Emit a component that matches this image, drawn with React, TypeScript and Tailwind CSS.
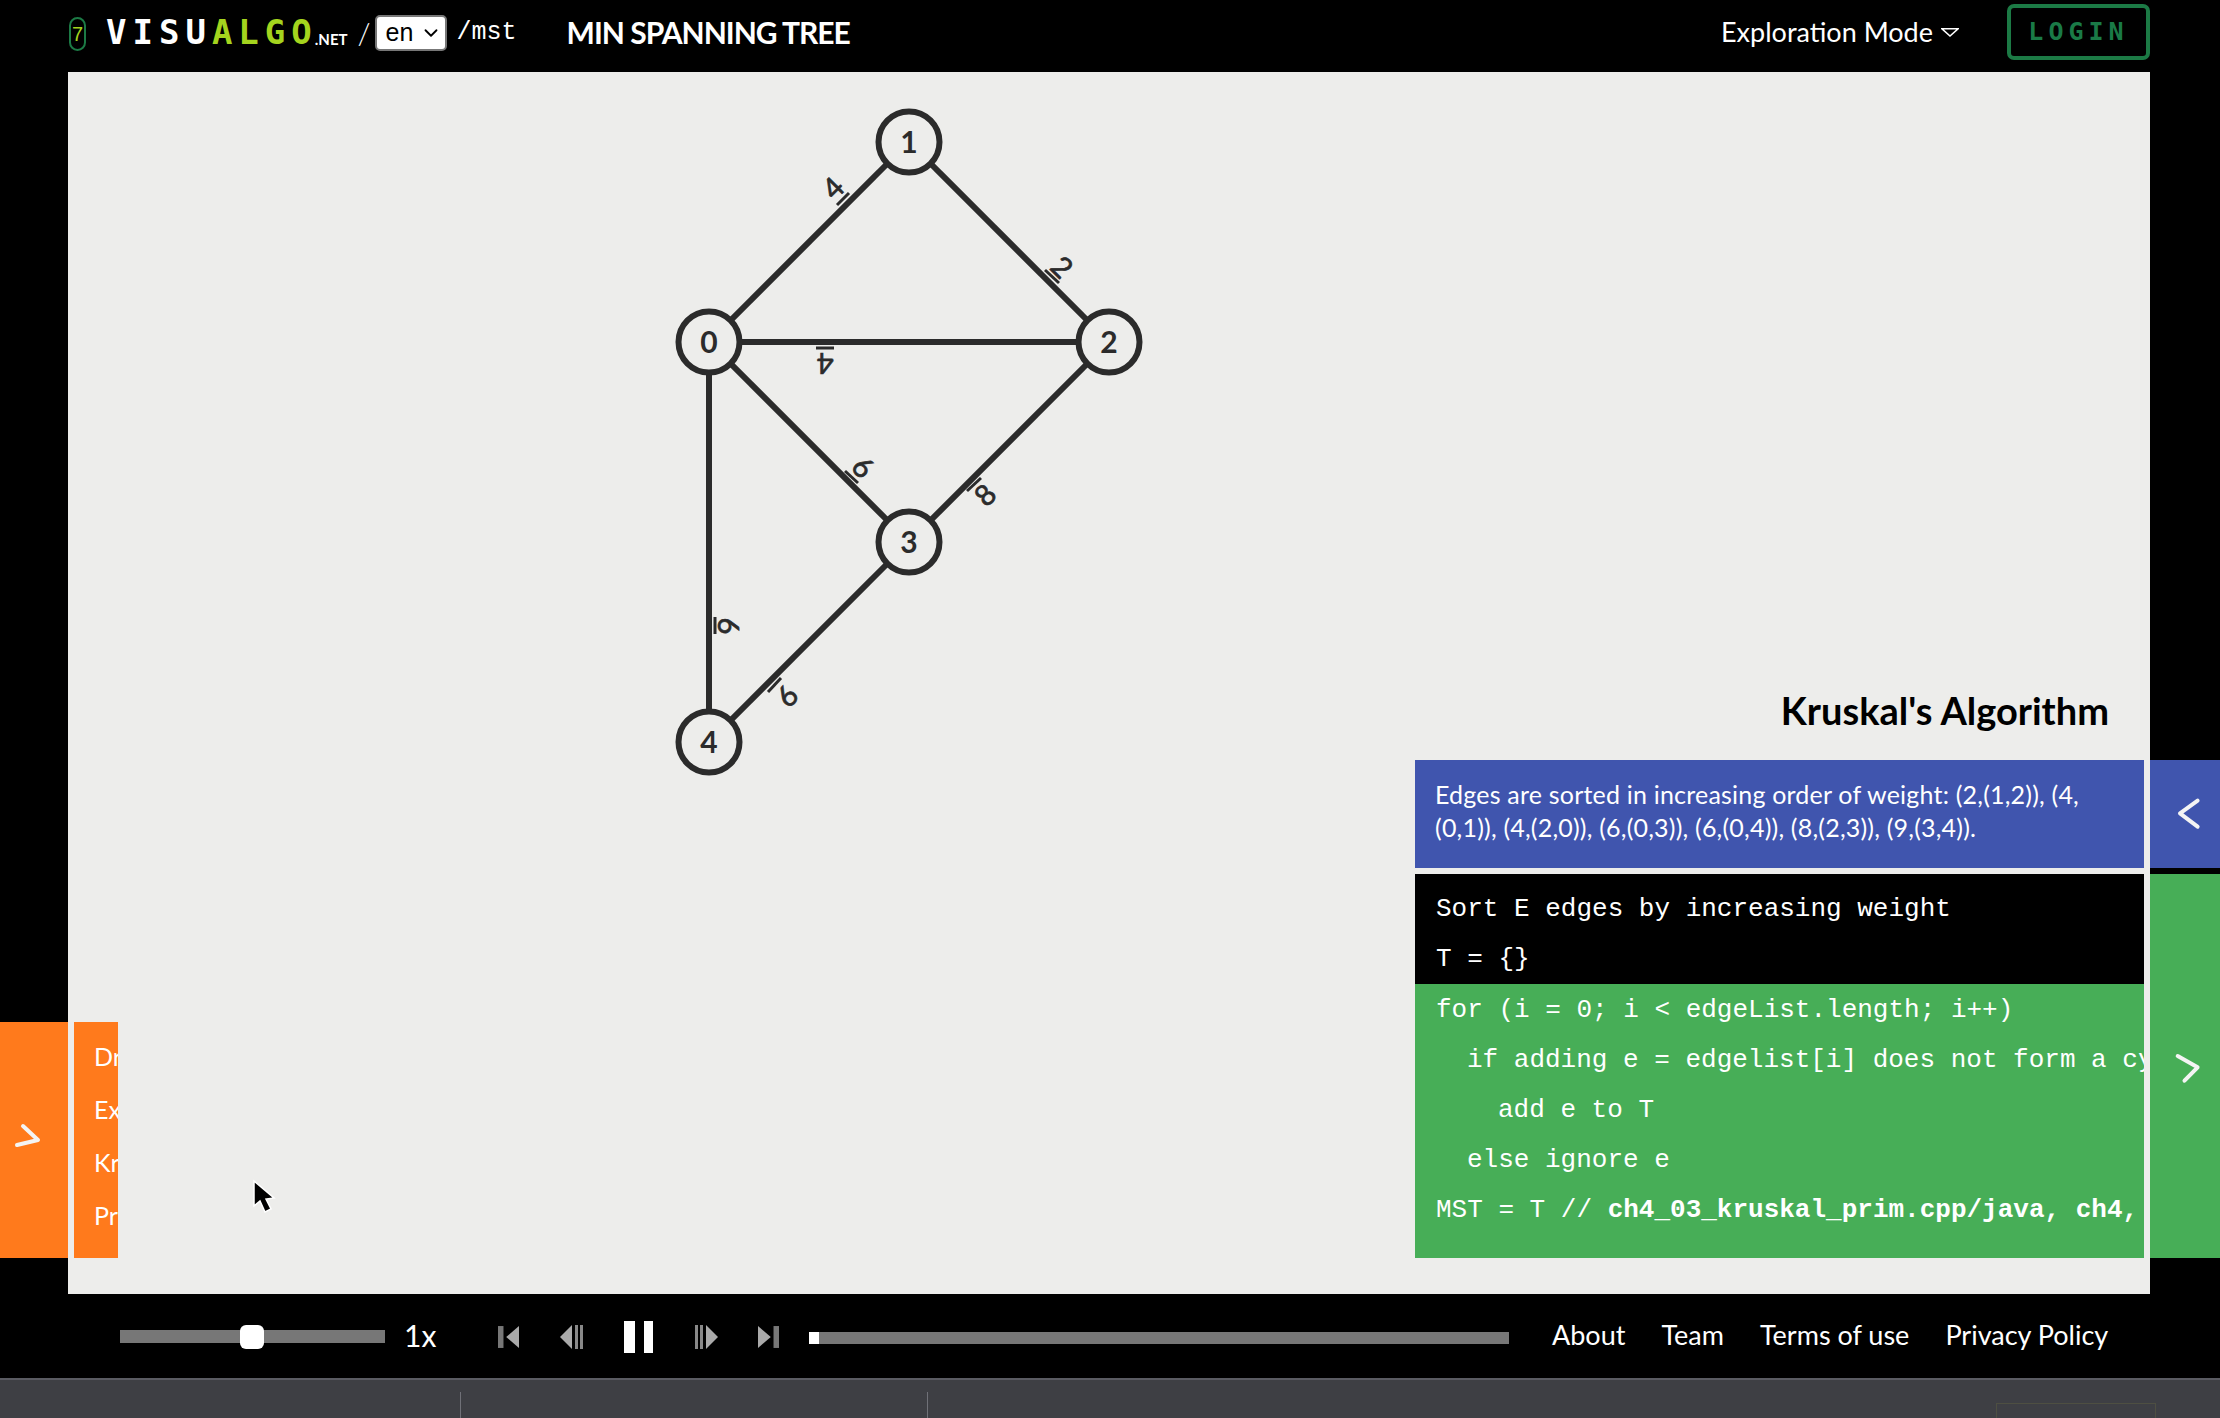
import { ChevronDown } from 'lucide-react';

const sans = 'font-["Lato","Noto_Sans",sans-serif]';
const mono = 'font-["Liberation_Mono",monospace]';

const nodes = [
    { id: 0, x: 709, y: 342 },
    { id: 1, x: 909, y: 142 },
    { id: 2, x: 1109, y: 342 },
    { id: 3, x: 909, y: 542 },
    { id: 4, x: 709, y: 742 },
];

const edges = [
    [0, 1],
    [1, 2],
    [0, 2],
    [0, 3],
    [2, 3],
    [0, 4],
    [3, 4],
];

// weight labels sit beside the edge, rotated, with a bar between digit and edge
const weights = [
    { w: '4', x: 833, y: 188, rot: -45, bar: [837, 205, 849, 193] },
    { w: '2', x: 1062, y: 267, rot: 45, bar: [1045, 270, 1059, 283] },
    { w: '4', x: 825, y: 363, rot: 180, bar: [816, 348, 834, 348] },
    { w: '6', x: 863, y: 467, rot: 45, bar: [845, 471, 858, 483] },
    { w: '8', x: 985, y: 495, rot: -45, bar: [967, 491, 981, 478] },
    { w: '6', x: 728, y: 626, rot: 90, bar: [715, 617, 715, 634] },
    { w: '6', x: 787, y: 696, rot: -45, bar: [768, 692, 781, 678] },
];

function Graph() {
    return (
        <svg className="absolute left-0 top-0" width={2082} height={1222} viewBox="68 72 2082 1222">
            {edges.map(([a, b]) => (
                <line
                    key={`${a}-${b}`}
                    x1={nodes[a].x}
                    y1={nodes[a].y}
                    x2={nodes[b].x}
                    y2={nodes[b].y}
                    stroke="#2b2b2b"
                    strokeWidth={6}
                />
            ))}
            {weights.map((e, i) => (
                <g key={i}>
                    <line x1={e.bar[0]} y1={e.bar[1]} x2={e.bar[2]} y2={e.bar[3]} stroke="#2b2b2b" strokeWidth={3} />
                    <text
                        x={e.x}
                        y={e.y}
                        dy="0.36em"
                        textAnchor="middle"
                        transform={`rotate(${e.rot} ${e.x} ${e.y})`}
                        fill="#2b2b2b"
                        stroke="#2b2b2b"
                        strokeWidth={0.7}
                        fontSize={29}
                        fontFamily="Lato, sans-serif"
                    >
                        {e.w}
                    </text>
                </g>
            ))}
            {nodes.map((n) => (
                <g key={n.id}>
                    <circle cx={n.x} cy={n.y} r={30.5} fill="#ededeb" stroke="#2b2b2b" strokeWidth={6} />
                    <text
                        x={n.x}
                        y={n.y}
                        dy="0.36em"
                        textAnchor="middle"
                        fill="#2b2b2b"
                        fontSize={30}
                        fontWeight={700}
                        fontFamily="Lato, sans-serif"
                    >
                        {n.id}
                    </text>
                </g>
            ))}
            {/* mouse pointer */}
            <path d="M254 1181 L254 1206 L260 1201 L265 1212 L271 1209 L266 1199 L274 1198 Z" fill="#000" stroke="#fff" strokeWidth={1.5} />
        </svg>
    );
}

function Header() {
    return (
        <header className="h-[72px] flex items-center pl-[69px] pr-[70px] pb-[8px] text-white">
            <div className="w-[17px] h-[34px] mt-[4px] rounded-full border-2 border-[#1c7a45] flex items-center justify-center text-[#a4d41e] text-[20px] font-['Liberation_Sans',sans-serif]">
                7
            </div>
            <div className="ml-[20px] text-[34px] leading-none font-bold tracking-[6px] font-['DejaVu_Sans_Mono',monospace] whitespace-nowrap">
                VISU<span className="text-[#a4d41e]">ALGO</span>
            </div>
            <span className={`text-[15px] font-bold mt-[14px] -ml-[3px] ${sans}`}>.NET</span>
            <span className={`ml-[10px] text-[30px] font-light ${sans}`}>/</span>
            <div className="ml-[4px] mt-[2px] w-[72px] h-[36px] bg-white rounded-[5px] border-2 border-[#777] flex items-center pl-[9px] gap-[7px] text-black text-[25px] font-['Liberation_Sans',sans-serif]">
                en
                <ChevronDown size={22} strokeWidth={2} />
            </div>
            <span className={`ml-[10px] mt-[2px] text-[25px] ${mono}`}>/mst</span>
            <h1 className={`ml-[50px] text-[30px] font-bold whitespace-nowrap tracking-[-1px] ${sans}`}>MIN SPANNING TREE</h1>

            <div className={`ml-auto flex items-center text-[27px] ${sans}`}>
                Exploration Mode
                <svg className="ml-[8px]" width={18} height={9} viewBox="0 0 18 9">
                    <path d="M1 0.8 H17 L9 8 Z" fill="none" stroke="#fff" strokeWidth={1.5} />
                </svg>
            </div>
            <div className="ml-[48px] w-[143px] h-[56px] rounded-[7px] border-[4px] border-[#1c7a45] flex items-center justify-center text-[#1a7a47] text-[25px] font-bold tracking-[5px] font-['DejaVu_Sans_Mono',monospace]">
                LOGIN
            </div>
        </header>
    );
}

function CodeLine({ children, className = 'pl-[21px]' }: { children: React.ReactNode; className?: string }) {
    return <div className={`h-[50px] flex items-center whitespace-pre ${className}`}><span>{children}</span></div>;
}

function StatusPanel() {
    return (
        <div className="w-[729px] mr-[6px] flex flex-col">
            <h2 className={`text-right pr-[35px] mb-[28px] text-[38px] leading-[44px] font-bold text-black ${sans}`}>Kruskal's Algorithm</h2>
            <div className={`h-[108px] bg-[#4055ae] text-white text-[25px] leading-[33px] pl-[20px] pt-[18px] whitespace-nowrap overflow-hidden tracking-[0.2px] ${sans}`}>
                Edges are sorted in increasing order of weight: (2,(1,2)), (4,
                <br />
                (0,1)), (4,(2,0)), (6,(0,3)), (6,(0,4)), (8,(2,3)), (9,(3,4)).
            </div>
            <div className={`mt-[6px] h-[384px] overflow-hidden text-white text-[26px] ${mono}`}>
                <div className="h-[110px] bg-black pt-[10px]">
                    <CodeLine>Sort E edges by increasing weight</CodeLine>
                    <CodeLine>T = {'{}'}</CodeLine>
                </div>
                <div className="h-[274px] bg-[#47ae57] pt-px">
                    <CodeLine>for (i = 0; i &lt; edgeList.length; i++)</CodeLine>
                    <CodeLine className="pl-[52px]">if adding e = edgelist[i] does not form a cycle</CodeLine>
                    <CodeLine className="pl-[83px]">add e to T</CodeLine>
                    <CodeLine className="pl-[52px]">else ignore e</CodeLine>
                    <CodeLine>
                        MST = T // <b>ch4_03_kruskal_prim.cpp/java, ch4,</b>
                    </CodeLine>
                </div>
            </div>
        </div>
    );
}

function ActionsPanel() {
    return (
        <div className={`ml-[6px] w-[44px] h-[236px] bg-[#ff7a1c] overflow-hidden text-white text-[25px] pl-[20px] pt-[8px] whitespace-nowrap ${sans}`}>
            {['Draw Graph', 'Example Graphs', "Kruskal's Algorithm", "Prim's Algorithm"].map((a) => (
                <div key={a} className="h-[53px] flex items-center">
                    {a}
                </div>
            ))}
        </div>
    );
}

function Arrow({ w, h, points }: { w: number; h: number; points: string }) {
    return (
        <svg width={w} height={h} viewBox={`0 0 ${w} ${h}`} className="block">
            <polyline points={points} fill="none" stroke="#f4f4f4" strokeWidth={4} strokeLinecap="round" strokeLinejoin="round" />
        </svg>
    );
}

function SkipIcon({ flip, end }: { flip?: boolean; end?: boolean }) {
    // "end" = skip to end/start shape, otherwise step shape with double bars
    return (
        <svg width={end ? 21 : 23} height={24} viewBox="0 0 23 24" className={flip ? '-scale-x-100' : ''}>
            {end ? (
                <>
                    <rect x="0" y="0" width="6" height="24" fill="#777" />
                    <polygon points="23,0 9,12 23,24" fill="#aaa" />
                </>
            ) : (
                <>
                    <polygon points="12,0 0,12 12,24" fill="#aaa" />
                    <rect x="15" y="0" width="3" height="24" fill="#888" />
                    <rect x="20" y="0" width="3" height="24" fill="#888" />
                </>
            )}
        </svg>
    );
}

function MediaBar() {
    return (
        <footer className="h-[84px] flex items-center pl-[120px] text-white">
            <div className="relative w-[265px] h-[13px] bg-[#777]">
                <div className="absolute left-[120px] -top-[5px] w-[24px] h-[24px] bg-white rounded-[6px]" />
            </div>
            <span className={`ml-[19px] mb-[2px] w-[33px] text-[30px] leading-none ${sans}`}>1x</span>
            <div className="ml-[61px] mt-[2px] flex items-center">
                <SkipIcon end />
                <div className="ml-[41px]">
                    <SkipIcon />
                </div>
                <div className="ml-[41px] flex gap-[9px]">
                    <div className="w-[11px] h-[32px] bg-white" />
                    <div className="w-[9px] h-[32px] bg-white" />
                </div>
                <div className="ml-[42px]">
                    <SkipIcon flip />
                </div>
                <div className="ml-[40px]">
                    <SkipIcon end flip />
                </div>
            </div>
            <div className="ml-[30px] mt-[4px] w-[700px] h-[12px] bg-[#777]">
                <div className="w-[10px] h-full bg-white" />
            </div>
            <nav className={`ml-[43px] mb-[2px] flex gap-[36px] text-[27px] whitespace-nowrap ${sans}`}>
                <a>About</a>
                <a>Team</a>
                <a>Terms of use</a>
                <a>Privacy Policy</a>
            </nav>
        </footer>
    );
}

export default function App() {
    return (
        <div className="w-[2220px] h-[1418px] bg-black flex flex-col overflow-hidden">
            <Header />
            <div className="h-[1222px] flex">
                <div className="w-[68px] pt-[950px]">
                    <div className="h-[236px] bg-[#ff7a1c]">
                        <Arrow w={68} h={236} points="17,123 38,118 23,104" />
                    </div>
                </div>
                <main className="relative w-[2082px] bg-[#ededeb] flex justify-between items-end pb-[36px]">
                    <Graph />
                    <div className="relative">
                        <ActionsPanel />
                    </div>
                    <div className="relative">
                        <StatusPanel />
                    </div>
                </main>
                <div className="w-[70px] pt-[688px]">
                    <div className="h-[108px] bg-[#4055ae]">
                        <Arrow w={70} h={108} points="47.6,40.7 30,53.3 47.6,66.7" />
                    </div>
                    <div className="mt-[6px] h-[384px] bg-[#47ae57]">
                        <Arrow w={70} h={384} points="27.7,182 47.6,193.3 34.5,206.7" />
                    </div>
                </div>
            </div>
            <MediaBar />
            <div className="h-[40px] bg-[#3e3f44] border-t-2 border-[#5a5b62] flex">
                <div className="ml-[460px] mt-[12px] w-px bg-[#707178]" />
                <div className="ml-[466px] mt-[12px] w-px bg-[#707178]" />
                <div className="ml-auto mr-[64px] mt-[23px] w-[160px] border-t border-x border-[#4e4f42]" />
            </div>
        </div>
    );
}
